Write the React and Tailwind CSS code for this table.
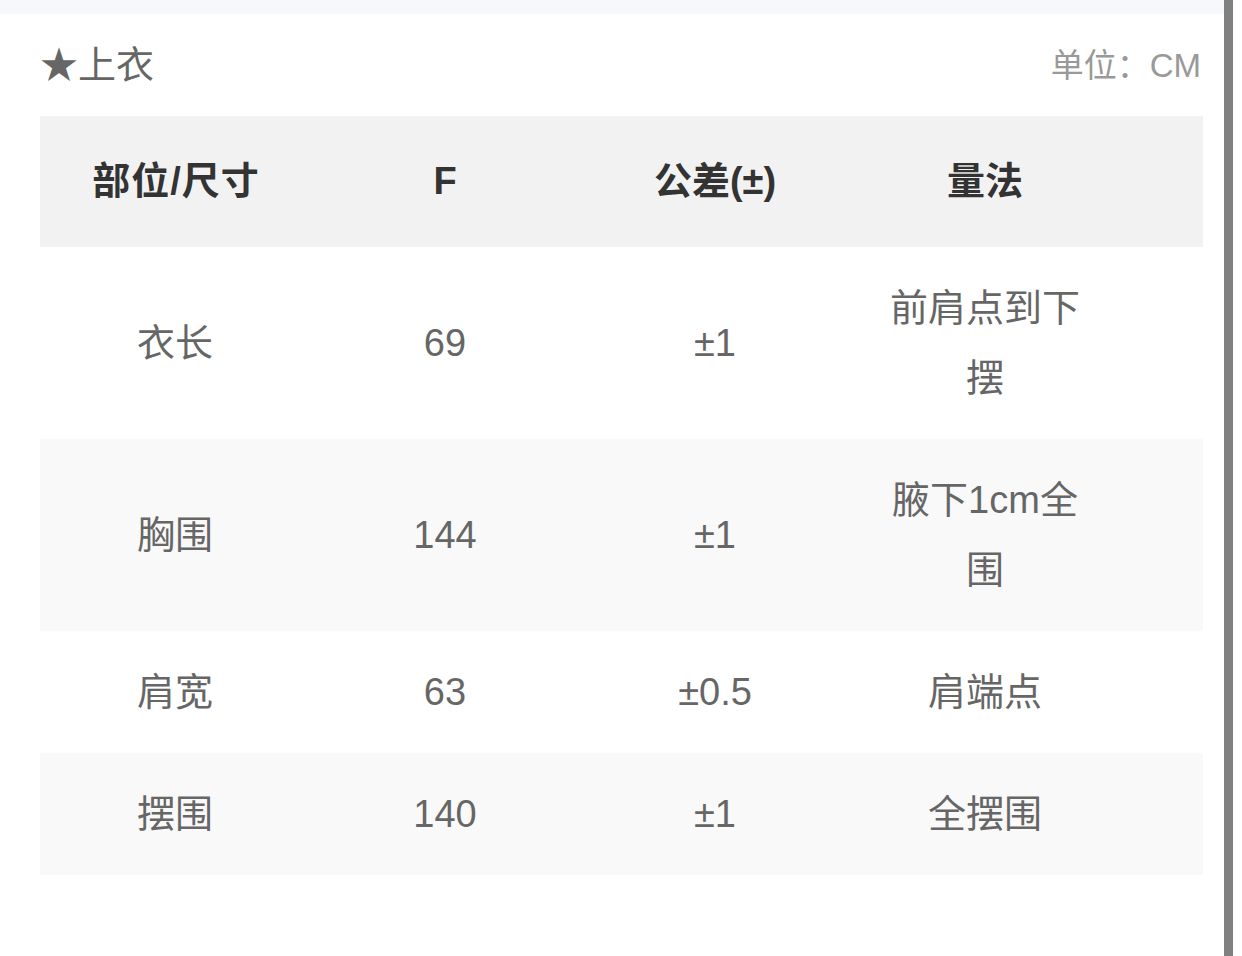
const rows = [
  { name: "衣长", size: "69", tol: "±1", method: "前肩点到下摆", alt: false },
  { name: "胸围", size: "144", tol: "±1", method: "腋下1cm全围", alt: true },
  { name: "肩宽", size: "63", tol: "±0.5", method: "肩端点", alt: false },
  { name: "摆围", size: "140", tol: "±1", method: "全摆围", alt: true },
];

const font = { fontFamily: '"Liberation Sans", "Noto Sans CJK SC", sans-serif' };

export default function App() {
  return (
    <div className="flex w-[1242px] h-[956px] bg-white overflow-hidden" style={font}>
      <div className="w-[1224px] flex flex-col">
        {/* top strip */}
        <div className="h-[14px] bg-[#f7f8fc]"></div>

        <div className="pl-[40px] pr-[21px]">
          {/* title line */}
          <div className="h-[102px] flex items-center justify-between">
            <div className="text-[38px] leading-none text-[#666]">★上衣</div>
            <div className="text-[33px] leading-none text-[#999] pr-[2px]">单位：CM</div>
          </div>

          {/* table */}
          <div className="w-[1163px]">
            <div className="grid grid-cols-[270px_270px_270px_270px_1fr] bg-[#f2f2f2] h-[131px] items-center text-[38px] font-bold text-[#333]">
              <div className="text-center pl-[2px] tracking-[1px]">部位/尺寸</div>
              <div className="text-center">F</div>
              <div className="text-center">公差(±)</div>
              <div className="text-center">量法</div>
              <div></div>
            </div>
            {rows.map((r) => (
              <div
                key={r.name}
                className={`grid grid-cols-[270px_270px_270px_270px_1fr] items-center py-[26px] text-[38px] leading-[70px] text-[#666] ${
                  r.alt ? "bg-[#f9f9f9]" : "bg-white"
                }`}
              >
                <div className="text-center">{r.name}</div>
                <div className="text-center">{r.size}</div>
                <div className="text-center">{r.tol}</div>
                <div className="text-center px-[26px] break-all">{r.method}</div>
                <div></div>
              </div>
            ))}
          </div>
        </div>
      </div>

      {/* scrollbar */}
      <div className="w-[9px] h-full bg-[#808080]"></div>
      <div className="flex-1"></div>
    </div>
  );
}
